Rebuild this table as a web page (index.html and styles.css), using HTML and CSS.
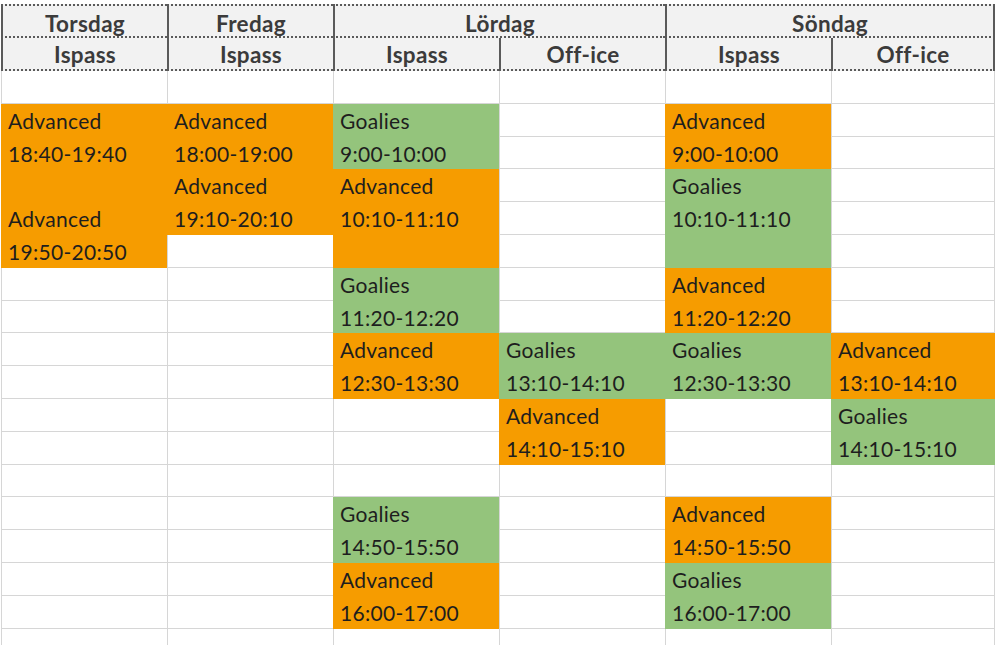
FILE: index.html
```html
<!DOCTYPE html>
<html lang="sv">
<head>
<meta charset="utf-8">
<title>Schema</title>
<link rel="stylesheet" href="styles.css">
</head>
<body>
<div class="sheet">
  <div class="hd day">Torsdag</div>
  <div class="hd day">Fredag</div>
  <div class="hd day span2">Lördag</div>
  <div class="hd day span2 last">Söndag</div>
  <div class="hd">Ispass</div>
  <div class="hd">Ispass</div>
  <div class="hd">Ispass</div>
  <div class="hd">Off-ice</div>
  <div class="hd">Ispass</div>
  <div class="hd last">Off-ice</div>

  <div class="col">
    <div class="e"></div>
    <div class="blk o"><div class="ln">Advanced</div><div class="ln">18:40-19:40</div><div class="ln"></div><div class="ln">Advanced</div><div class="ln">19:50-20:50</div></div>
    <div class="e"></div><div class="e"></div><div class="e"></div><div class="e"></div><div class="e"></div><div class="e"></div>
    <div class="e"></div><div class="e"></div><div class="e"></div><div class="e"></div><div class="e"></div><div class="e"></div>
  </div>

  <div class="col">
    <div class="e"></div>
    <div class="blk o"><div class="ln">Advanced</div><div class="ln">18:00-19:00</div><div class="ln">Advanced</div><div class="ln">19:10-20:10</div></div>
    <div class="e"></div><div class="e"></div><div class="e"></div><div class="e"></div><div class="e"></div><div class="e"></div><div class="e"></div>
    <div class="e"></div><div class="e"></div><div class="e"></div><div class="e"></div><div class="e"></div><div class="e"></div>
  </div>

  <div class="col">
    <div class="e"></div>
    <div class="blk g"><div class="ln">Goalies</div><div class="ln">9:00-10:00</div></div>
    <div class="blk o"><div class="ln">Advanced</div><div class="ln">10:10-11:10</div><div class="ln"></div></div>
    <div class="blk g"><div class="ln">Goalies</div><div class="ln">11:20-12:20</div></div>
    <div class="blk o"><div class="ln">Advanced</div><div class="ln">12:30-13:30</div></div>
    <div class="e"></div><div class="e"></div><div class="e"></div>
    <div class="blk g"><div class="ln">Goalies</div><div class="ln">14:50-15:50</div></div>
    <div class="blk o"><div class="ln">Advanced</div><div class="ln">16:00-17:00</div></div>
    <div class="e"></div><div class="e"></div>
  </div>

  <div class="col">
    <div class="e"></div><div class="e"></div><div class="e"></div><div class="e"></div>
    <div class="e"></div><div class="e"></div><div class="e"></div><div class="e"></div>
    <div class="blk g"><div class="ln">Goalies</div><div class="ln">13:10-14:10</div></div>
    <div class="blk o"><div class="ln">Advanced</div><div class="ln">14:10-15:10</div></div>
    <div class="e"></div><div class="e"></div><div class="e"></div><div class="e"></div><div class="e"></div><div class="e"></div><div class="e"></div>
  </div>

  <div class="col">
    <div class="e"></div>
    <div class="blk o"><div class="ln">Advanced</div><div class="ln">9:00-10:00</div></div>
    <div class="blk g"><div class="ln">Goalies</div><div class="ln">10:10-11:10</div><div class="ln"></div></div>
    <div class="blk o"><div class="ln">Advanced</div><div class="ln">11:20-12:20</div></div>
    <div class="blk g"><div class="ln">Goalies</div><div class="ln">12:30-13:30</div></div>
    <div class="e"></div><div class="e"></div><div class="e"></div>
    <div class="blk o"><div class="ln">Advanced</div><div class="ln">14:50-15:50</div></div>
    <div class="blk g"><div class="ln">Goalies</div><div class="ln">16:00-17:00</div></div>
    <div class="e"></div><div class="e"></div>
  </div>

  <div class="col lastcol">
    <div class="e"></div><div class="e"></div><div class="e"></div><div class="e"></div>
    <div class="e"></div><div class="e"></div><div class="e"></div><div class="e"></div>
    <div class="blk o"><div class="ln">Advanced</div><div class="ln">13:10-14:10</div></div>
    <div class="blk g"><div class="ln">Goalies</div><div class="ln">14:10-15:10</div></div>
    <div class="e"></div><div class="e"></div><div class="e"></div><div class="e"></div><div class="e"></div><div class="e"></div><div class="e"></div>
  </div>
</div>
</body>
</html>
```
FILE: styles.css
```css
html, body {
  margin: 0;
  padding: 0;
  background: #ffffff;
  overflow: hidden;
  height: 645px;
}
body {
  font-family: Lato, "Liberation Sans", sans-serif;
  --rh: 32.8px;
  --grid: #d6d6d6;
  --hdline: #5a5a5a;
}
.sheet {
  display: grid;
  grid-template-columns: 166px 166px 166px 166px 166px 164px;
  grid-auto-rows: auto;
  margin: 4px 0 0 1px;
  width: 994px;
}
.hd {
  height: 33px;
  box-sizing: border-box;
  background: #f2f2f2;
  border-left: 2px solid var(--hdline);
  border-bottom: 2px dotted var(--hdline);
  text-align: center;
  font-weight: 700;
  font-size: 22.5px;
  letter-spacing: 0.3px;
  line-height: 33px;
  color: #3b3b3b;
  white-space: nowrap;
}
.hd.day {
  border-top: 2px dotted var(--hdline);
  height: 34px;
  line-height: 35px;
}
.hd.span2 {
  grid-column: span 2;
}
.hd.last {
  border-right: 2px solid var(--hdline);
}
.col {
  display: flex;
  flex-direction: column;
}
.e {
  height: var(--rh);
  flex: none;
  box-sizing: border-box;
  border-left: 1px solid var(--grid);
  border-bottom: 1px solid var(--grid);
}
.lastcol .e {
  border-right: 1px solid var(--grid);
}
.blk {
  display: flex;
  flex-direction: column;
  flex: none;
}
.blk.o {
  background: #f69c00;
}
.blk.g {
  background: #94c47c;
}
.ln {
  height: var(--rh);
  box-sizing: border-box;
  padding: 1px 0 0 7px;
  line-height: 31px;
  font-size: 21px;
  letter-spacing: 0.3px;
  color: #1e1e1e;
  white-space: nowrap;
}
```
